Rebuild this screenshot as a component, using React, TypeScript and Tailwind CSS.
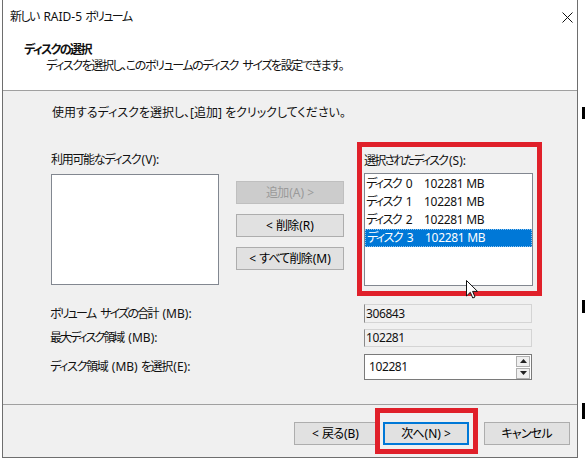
import React from "react";

const disks = [
  { name: "ディスク", no: "0", size: "102281 MB" },
  { name: "ディスク", no: "1", size: "102281 MB" },
  { name: "ディスク", no: "2", size: "102281 MB" },
  { name: "ディスク", no: "3", size: "102281 MB", selected: true },
];

const font = "font-['Noto_Sans','Noto_Sans_CJK_JP',sans-serif] [font-feature-settings:'palt']";

// Japanese runs are narrower in the original UI font, so tighten them only
// (the margin gives back the spacing that the last glyph would eat)
function T({ text, jp }: { text: string; jp: string }) {
  const parts = text.split(/([\x00-\x7F]+)/).filter(Boolean);
  return (
    <>
      {parts.map((p, i) =>
        /^[\x00-\x7F]+$/.test(p) ? (
          <span key={i} className="whitespace-pre">{p}</span>
        ) : (
          <span key={i} className={jp}>{p}</span>
        )
      )}
    </>
  );
}

function Btn({ label, w, primary, disabled }: { label: string; w: string; primary?: boolean; disabled?: boolean }) {
  return (
    <div
      className={`${w} h-[23px] flex items-center justify-center text-[12px] leading-none ${
        disabled
          ? "bg-[#cccccc] border border-[#bfbfbf] text-[#9a9a9a]"
          : primary
            ? "bg-[#e1e1e1] border-2 border-[#0078d7] text-black"
            : "bg-[#e1e1e1] border border-[#adadad] text-black"
      }`}
    >
      <T text={label} jp="tracking-[-0.8px] mr-[0.8px]" />
    </div>
  );
}

export default function App() {
  return (
    <div className={`relative w-[585px] h-[461px] bg-white overflow-hidden text-[#111] ${font}`}>
      <div className="flex">
        {/* dialog window */}
        <div className="ml-[2px] w-[576px] h-[458px] border-l border-r border-b border-[#6e6e6e] flex flex-col">
          {/* title + header */}
          <div className="h-[91px] bg-white border-b border-[#a0a0a0] shrink-0">
            <div className="h-[34px] flex items-center justify-between pl-[7px] pr-[4px]">
              <span className="text-[12px] leading-[14px]">
                <T text="新しい RAID-5 ボリューム" jp="tracking-[-1.6px] mr-[1.6px]" />
              </span>
              <svg width="11" height="11" viewBox="0 0 11 11">
                <path d="M0.5 0.5 L10.5 10.5 M10.5 0.5 L0.5 10.5" stroke="#111" strokeWidth="1" />
              </svg>
            </div>
            <div className="mt-[9px] pl-[21px] text-[12px] leading-[14px] font-bold tracking-[-1.6px]">ディスクの選択</div>
            <div className="mt-[2px] pl-[43px] text-[12px] leading-[14px]">
              <T text="ディスクを選択し、このボリュームのディスク サイズを設定できます。" jp="tracking-[-1.4px] mr-[1.4px]" />
            </div>
          </div>

          {/* body */}
          <div className="h-[314px] bg-[#f0f0f0] border-b border-[#a0a0a0] shrink-0 pl-[48px] pt-[15px] text-[12px] leading-[14px]">
            <div className="ml-[1px]">使用するディスクを選択し、[追加] をクリックしてください。</div>

            <div className="flex items-start mt-[33px]">
              <div className="w-[168px]">
                <div>
                  <T text="利用可能なディスク(V):" jp="tracking-[-1.3px] mr-[1.3px]" />
                </div>
                <div className="mt-[7px] h-[111px] bg-white border border-[#828790]" />
              </div>

              <div className="ml-[17px] mt-[28px] w-[108px] flex flex-col gap-[10px]">
                <Btn label="追加(A) >" w="w-[108px]" disabled />
                <Btn label="< 削除(R)" w="w-[108px]" />
                <Btn label="< すべて削除(M)" w="w-[108px]" />
              </div>

              <div className="ml-[20px] w-[169px]">
                <div className="mt-[1px]">
                  <T text="選択されたディスク(S):" jp="tracking-[-1.8px] mr-[1.8px]" />
                </div>
                <div className="mt-[5px] h-[113px] bg-white border border-[#828790] pt-[1px]">
                  {disks.map((d) => (
                    <div
                      key={d.no}
                      className={`h-[18px] flex items-center pl-[1px] ${
                        d.selected ? "bg-[#0078d7] text-white border border-dotted border-[#8ec3ee]" : ""
                      }`}
                    >
                      <span className="w-[58px] whitespace-pre">
                        <span className="tracking-[-1.5px] mr-[1.5px]">{d.name}</span> {d.no}
                      </span>
                      <span className="tracking-[-0.3px]">{d.size}</span>
                    </div>
                  ))}
                </div>
              </div>
            </div>

            <div className="mt-[18px] flex flex-col gap-[7px] -ml-[1px]">
              <div className="h-[19px] flex items-center">
                <span className="w-[314px]">
                  <T text="ボリューム サイズの合計 (MB):" jp="tracking-[-1.8px] mr-[1.8px]" />
                </span>
                <div className="w-[168px] h-[19px] bg-[#f0f0f0] border border-[#d4d4d4] border-l-[#8a8a8a] flex items-center pl-[1px] tracking-[-0.4px]">
                  306843
                </div>
              </div>
              <div className="h-[18px] flex items-center -mt-[1px]">
                <span className="w-[314px]">
                  <T text="最大ディスク領域 (MB):" jp="tracking-[-2px] mr-[2px]" />
                </span>
                <div className="w-[168px] h-[18px] bg-[#f0f0f0] border border-[#d4d4d4] border-l-[#8a8a8a] flex items-center pl-[1px] tracking-[-0.4px]">
                  102281
                </div>
              </div>
              <div className="h-[26px] flex items-center">
                <span className="w-[314px]">
                  <T text="ディスク領域 (MB) を選択(E):" jp="tracking-[-1.3px] mr-[1.3px]" />
                </span>
                <div className="w-[168px] h-[26px] bg-white border border-[#7a7a7a] flex items-center pl-[4px] pr-[1px]">
                  <span className="flex-1 tracking-[-0.4px]">102281</span>
                  <div className="flex flex-col gap-[1px]">
                    <div className="w-[14px] h-[11px] bg-[#f0f0f0] border border-[#b0b0b0] flex items-center justify-center">
                      <svg width="7" height="4" viewBox="0 0 7 4"><path d="M0 4 L3.5 0 L7 4 Z" fill="#222" /></svg>
                    </div>
                    <div className="w-[14px] h-[11px] bg-[#f0f0f0] border border-[#b0b0b0] flex items-center justify-center">
                      <svg width="7" height="4" viewBox="0 0 7 4"><path d="M0 0 L3.5 4 L7 0 Z" fill="#222" /></svg>
                    </div>
                  </div>
                </div>
              </div>
            </div>
          </div>

          {/* footer */}
          <div className="flex-1 bg-[#f0f0f0] flex justify-end items-start pt-[17px] pr-[7px]">
            <Btn label="< 戻る(B)" w="w-[83px]" />
            <div className="ml-[6px]">
              <Btn label="次へ(N) >" w="w-[86px]" primary />
            </div>
            <div className="ml-[15px]">
              <Btn label="キャンセル" w="w-[86px]" />
            </div>
          </div>
        </div>

        {/* desktop strip to the right */}
        <div className="flex-1 h-[461px] flex flex-col items-end">
          <div className="mt-[107px] w-[3px] h-[12px] bg-black" />
          <div className="mt-[181px] w-[3px] h-[13px] bg-black" />
          <div className="mt-[90px] w-[3px] h-[16px] bg-black" />
        </div>
      </div>

      {/* red highlight frames */}
      <div className="absolute left-[357px] top-[142px] w-[185px] h-[154px] border-[5px] border-[#e0202a]" />
      <div className="absolute left-[375px] top-[408px] w-[103px] h-[46px] border-[5px] border-[#e0202a]" />

      {/* mouse pointer */}
      <svg className="absolute left-[466px] top-[280px]" width="12" height="19" viewBox="0 0 12 19">
        <path d="M0.5 0.5 L0.5 16 L4.3 12.3 L6.8 18 L9 17 L6.6 11.4 L11.5 11.4 Z" fill="white" stroke="#111" strokeWidth="1" />
      </svg>
    </div>
  );
}
